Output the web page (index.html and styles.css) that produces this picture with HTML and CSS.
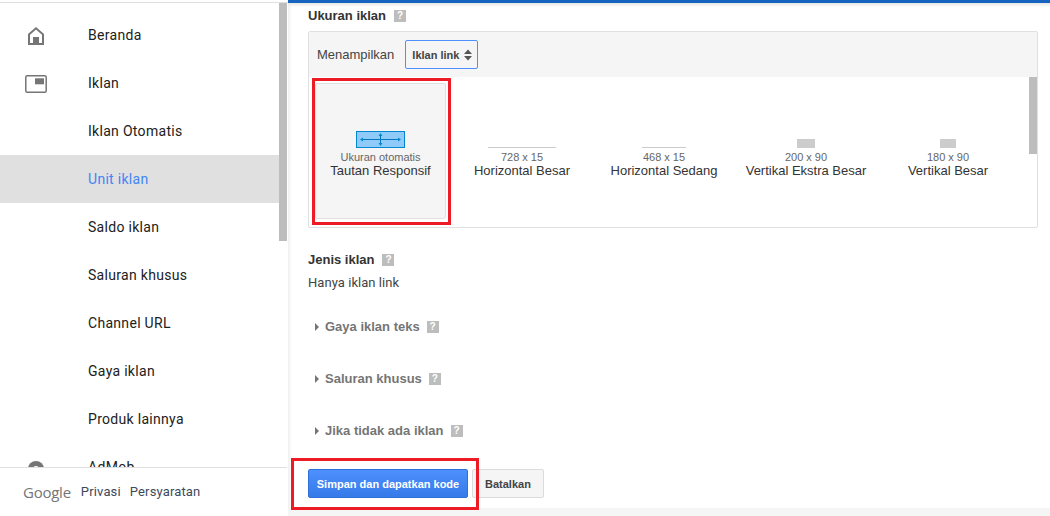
FILE: index.html
```html
<!DOCTYPE html>
<html lang="id">
<head>
<meta charset="utf-8">
<title>Unit iklan</title>
<link rel="stylesheet" href="styles.css">
</head>
<body>
<div class="app">
  <aside class="sidebar">
    <nav class="nav">
      <div class="nav-item"><span class="nav-icon"><svg class="ico-home" width="16" height="18" viewBox="0 0 16 18"><path d="M8 0 L16 7 V18 H0 V7 Z M8 2.4 L2 7.8 V16 H5 V10 H11 V16 H14 V7.8 Z" fill="#757575" fill-rule="evenodd"/><rect x="5" y="10" width="6" height="7" fill="#757575"/></svg></span><span>Beranda</span></div>
      <div class="nav-item"><span class="nav-icon"><svg class="ico-ad" width="22" height="18" viewBox="0 0 22 18"><rect x="0.8" y="0.8" width="20.4" height="16.4" rx="1.5" fill="none" stroke="#757575" stroke-width="1.5"/><rect x="10" y="3.3" width="9" height="6" fill="#757575"/></svg></span><span>Iklan</span></div>
      <div class="nav-item"><span class="nav-icon"></span><span>Iklan Otomatis</span></div>
      <div class="nav-item active"><span class="nav-icon"></span><span>Unit iklan</span></div>
      <div class="nav-item"><span class="nav-icon"></span><span>Saldo iklan</span></div>
      <div class="nav-item"><span class="nav-icon"></span><span>Saluran khusus</span></div>
      <div class="nav-item"><span class="nav-icon"></span><span>Channel URL</span></div>
      <div class="nav-item"><span class="nav-icon"></span><span>Gaya iklan</span></div>
      <div class="nav-item"><span class="nav-icon"></span><span>Produk lainnya</span></div>
      <div class="nav-item"><span class="nav-icon"><svg class="ico-admob" width="16" height="16" viewBox="0 0 16 16"><circle cx="8" cy="8" r="8" fill="#757575"/><circle cx="8" cy="8" r="3" fill="#fff"/></svg></span><span>AdMob</span></div>
    </nav>
    <div class="nav-thumb"></div>
    <footer class="side-footer">
      <span class="google">Google</span>
      <span class="foot-link">Privasi</span>
      <span class="foot-link">Persyaratan</span>
    </footer>
  </aside>
  <main class="main">
    <section class="content">
      <h2 class="label">Ukuran iklan <span class="help">?</span></h2>
      <div class="size-box">
        <div class="size-head">
          <span class="show-label">Menampilkan</span>
          <span class="select">Iklan link
            <svg class="updown" width="8" height="12" viewBox="0 0 8 12"><path d="M4 0.5 L8 5 H0 Z M4 11.5 L0 7 H8 Z" fill="#555"/></svg>
          </span>
        </div>
        <div class="size-list">
          <div class="size-card selected">
            <svg class="resp" width="49" height="17" viewBox="0 0 49 17"><rect x="0.5" y="0.5" width="48" height="16" fill="#90caf9" stroke="#0288d1"/><path d="M5 8.5 H44 M24.5 3.5 V13.5" stroke="#0277bd" fill="none"/><path d="M4 8.5 L7 6.5 V10.5 Z M45 8.5 L42 6.5 V10.5 Z M24.5 2 L22.5 5 H26.5 Z M24.5 15 L22.5 12 H26.5 Z" fill="#0288d1"/></svg>
            <span class="dim">Ukuran otomatis</span>
            <span class="name">Tautan Responsif</span>
          </div>
          <div class="size-card"><i class="prev wide"></i><span class="dim">728 x 15</span><span class="name">Horizontal Besar</span></div>
          <div class="size-card"><i class="prev mid"></i><span class="dim">468 x 15</span><span class="name">Horizontal Sedang</span></div>
          <div class="size-card"><i class="prev xl"></i><span class="dim">200 x 90</span><span class="name">Vertikal Ekstra Besar</span></div>
          <div class="size-card"><i class="prev lg"></i><span class="dim">180 x 90</span><span class="name">Vertikal Besar</span></div>
          <div class="list-thumb"></div>
        </div>
      </div>
      <h2 class="label type-label">Jenis iklan <span class="help">?</span></h2>
      <p class="only">Hanya iklan link</p>
      <div class="opt"><i class="caret"></i><span>Gaya iklan teks</span><span class="help">?</span></div>
      <div class="opt"><i class="caret"></i><span>Saluran khusus</span><span class="help">?</span></div>
      <div class="opt"><i class="caret"></i><span>Jika tidak ada iklan</span><span class="help">?</span></div>
      <div class="actions">
        <button class="btn primary">Simpan dan dapatkan kode</button>
        <button class="btn">Batalkan</button>
      </div>
    </section>
    <div class="red-box red-card"></div>
    <div class="red-box red-btn"></div>
  </main>
</div>
</body>
</html>
```
FILE: styles.css
```css
* { box-sizing: border-box; }
html, body { margin: 0; height: 100%; overflow: hidden; background: #fff; }
body { font-family: "Liberation Sans", Arial, sans-serif; color: #333; }
.app { display: flex; height: 516px; width: 1050px; }

.sidebar { position: relative; width: 288px; flex: none; border-top: 1px solid #e0e0e0; margin-top: 2px; height: 514px; overflow: hidden; background: #fff; }
.nav { width: 279px; height: 464px; overflow: hidden; padding-top: 8px; }
.nav-item { height: 48px; display: flex; align-items: center; padding-left: 24px; font: 400 14px Roboto, sans-serif; letter-spacing: .3px; color: #212121; }
.nav-item.active { background: #e0e0e0; color: #4285f4; }
.nav-icon { width: 64px; flex: none; display: flex; align-items: center; }
.ico-home { margin-left: 4px; margin-top: 1px; }
.ico-ad { margin-left: 1px; margin-top: 1px; }
.ico-admob { margin-left: 4px; margin-top: 4px; }
.nav-thumb { position: absolute; left: 279px; top: 0; width: 8px; height: 238px; background: #bdbdbd; }
.side-footer { position: absolute; left: 0; right: 1px; top: 464px; height: 50px; border-top: 1px solid #e0e0e0; background: #fff; display: flex; align-items: center; padding: 0 0 2px 23px; font: 400 13px Roboto, sans-serif; color: #3c4a5c; letter-spacing: .15px; }
.google { font: 400 15px "Open Sans", sans-serif; color: #757575; letter-spacing: -.25px; margin-right: 10px; }
.foot-link { margin-right: 9px; }

.main { position: relative; flex: 1; height: 516px; background: #f5f5f5; border-top: 3px solid #1565c0; }
.content { padding: 5px 12px 0 20px; height: 505px; background: linear-gradient(#e6e6e6, rgba(255,255,255,0) 4px), linear-gradient(90deg, #f0f0f0, #fff 4px); }
.label { margin: 0; font: 700 13px/16px "Liberation Sans", sans-serif; color: #333; display: flex; align-items: center; gap: 8px; }
.help { width: 12px; height: 12px; background: #bdbdbd; color: #fff; font: 700 10px/12px "Liberation Sans", sans-serif; text-align: center; display: inline-block; letter-spacing: 0; }
.size-box { margin-top: 7px; width: 730px; height: 197px; border: 1px solid #e0e0e0; border-radius: 2px; background: #fff; }
.size-head { height: 45px; background: #f5f5f5; display: flex; align-items: center; padding-left: 8px; gap: 11px; }
.show-label { font: 400 13px "Liberation Sans", sans-serif; color: #444; }
.select { width: 73px; height: 29px; border: 1px solid #4d90fe; border-radius: 2px; background: #f5f5f5; display: flex; align-items: center; justify-content: space-between; padding: 0 5px 0 6px; font: 700 11px "Liberation Sans", sans-serif; color: #444; }
.size-list { position: relative; height: 150px; display: flex; }
.size-card { width: 142px; flex: none; display: flex; flex-direction: column; align-items: center; justify-content: flex-end; padding-bottom: 50px; }
.size-card.selected { width: 131px; height: 136px; margin: 6px 5px 0 6px; padding-bottom: 41px; background: #f5f5f5; border: 1px solid #e0e0e0; border-radius: 2px; }
.prev { display: block; background: #ccc; }
.prev.wide { width: 68px; height: 1px; }
.prev.mid { width: 44px; height: 1px; }
.prev.xl { width: 18px; height: 9px; }
.prev.lg { width: 16px; height: 9px; }
.dim { font: 400 11px/14px "Liberation Sans", sans-serif; color: #666; margin-top: 2px; }
.name { font: 400 13px/13px "Liberation Sans", sans-serif; color: #333; }
.list-thumb { position: absolute; right: 0; top: 0; width: 8px; height: 77px; background: #bdbdbd; }
.type-label { margin-top: 24px; }
.only { margin: 7px 0 0; font: 400 13px/16px Roboto, sans-serif; color: #444; letter-spacing: .05px; }
.opt { display: flex; align-items: center; height: 16px; margin: 28px 0 0 7px; font: 700 13px/16px "Liberation Sans", sans-serif; color: #757575; }
.opt + .opt { margin-top: 36px; }
.opt .help { margin-left: 7px; }
.caret { width: 0; height: 0; border: 4px solid transparent; border-left: 4px solid #757575; border-right: 0; margin-right: 6px; }
.actions { display: flex; gap: 4px; margin-top: 30px; }
.btn { height: 29px; padding: 0 12px; font: 700 11px "Liberation Sans", sans-serif; border: 1px solid #dcdcdc; border-radius: 2px; background: #f5f5f5; color: #444; }
.btn.primary { width: 160px; padding: 0; background-image: linear-gradient(#4d90fe, #357ae8); border-color: #2f6fd8; color: #fff; }
.red-box { position: absolute; border: 3px solid #ed1c24; }
.red-card { left: 24px; top: 75px; width: 139px; height: 147px; }
.red-btn { left: 3px; top: 455px; width: 188px; height: 52px; }
```
